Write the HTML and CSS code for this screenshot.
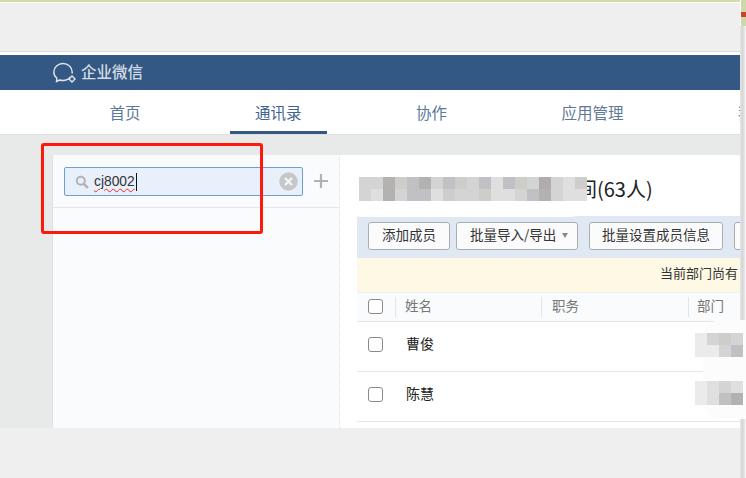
FILE: index.html
```html
<!DOCTYPE html>
<html lang="zh-CN">
<head>
<meta charset="utf-8">
<title>企业微信</title>
<link rel="stylesheet" href="styles.css">
</head>
<body>
<div class="shell">
  <main class="page">
    <div class="browser-bar"></div>
    <header class="brand">
      <svg class="brand-icon" width="26" height="22" viewBox="0 0 26 22" fill="none" stroke="#e3e7ec" stroke-width="1.4">
        <path d="M17.500 15C15.800 17 13 18.500 10 18.500C8.500 18.500 7.500 18.300 6.500 18L3.500 19.500L3.800 16C1.800 14.500.8 12.500.8 10C.8 5.500 5 1.500 10 1.500C15 1.500 19.200 5.500 19.200 10C19.200 10.500 19.100 11 19 11.500"/>
        <path d="M19 14l3 3-3 3-3-3z"/>
      </svg>
      <span class="brand-name">企业微信</span>
    </header>
    <nav class="nav">
      <a class="nav-item">首页</a>
      <a class="nav-item active">通讯录</a>
      <a class="nav-item">协作</a>
      <a class="nav-item">应用管理</a>
      <a class="nav-item">我的企业</a>
    </nav>
    <div class="content">
      <aside class="side">
        <div class="side-head">
          <div class="search">
            <svg class="search-icon" width="14" height="14" viewBox="0 0 14 14" fill="none" stroke="#b3b3b3">
              <circle cx="5.800" cy="5.800" r="4" stroke-width="2"/>
              <path d="M8.800 8.800l4 4" stroke-width="2.600"/>
            </svg>
            <span class="search-text">cj8002</span><span class="caret"></span>
            <svg class="clear" width="19" height="19" viewBox="0 0 19 19">
              <circle cx="9.500" cy="9.500" r="9.200" fill="#c6c7c9"/>
              <path d="M6 6l7 7M13 6l-7 7" stroke="#f3f5f8" stroke-width="2.400"/>
            </svg>
          </div>
          <svg class="plus" width="14" height="14" viewBox="0 0 14 14"><path d="M7 0v14M0 7h14" stroke="#b2b2b2" stroke-width="2.200"/></svg>
        </div>
      </aside>
      <section class="main">
        <div class="title-row">
          <div class="halo-title"></div>
          <div class="mosaic mosaic-title">
            <i class="t3"></i><i class="t3"></i><i class="t6"></i><i class="t4"></i><i class="t5"></i><i class="t6"></i><i class="t3"></i><i class="t5"></i><i class="t4"></i><i class="t3"></i><i class="t5"></i><i class="t2"></i><i class="t5"></i><i class="t4"></i><i class="t3"></i><i class="t7"></i><i class="t3"></i><i class="t2"></i><i class="t4"></i>
            <i class="t3"></i><i class="t2"></i><i class="t6"></i><i class="t3"></i><i class="t5"></i><i class="t5"></i><i class="t2"></i><i class="t4"></i><i class="t3"></i><i class="t3"></i><i class="t4"></i><i class="t2"></i><i class="t2"></i><i class="t3"></i><i class="t5"></i><i class="t6"></i><i class="t3"></i><i class="t2"></i><i class="t2"></i>
          </div>
          <h1 class="title">间(63人)</h1>
        </div>
        <div class="toolbar">
          <button class="btn btn-add">添加成员</button>
          <button class="btn btn-import">批量导入/导出<span class="arrow"></span></button>
          <button class="btn btn-set">批量设置成员信息</button>
          <button class="btn btn-more"></button>
        </div>
        <div class="notice"><span>当前部门尚有</span></div>
        <div class="table">
          <div class="row head">
            <div class="cell-check"><span class="check"></span></div>
            <div class="cell cell-name">姓名</div>
            <div class="cell">职务</div>
            <div class="cell cell-dept">部门</div>
          </div>
          <div class="row">
            <div class="cell-check"><span class="check"></span></div>
            <div class="cell name">曹俊</div>
          </div>
          <div class="row">
            <div class="cell-check"><span class="check"></span></div>
            <div class="cell name">陈慧</div>
          </div>
        </div>
      </section>
    </div>
    <div class="bottom"></div>
  </main>
  <div class="gutter"><div class="gutter-top"></div></div>

  <div class="mark"></div>
  <div class="halo-right"></div>
  <div class="mosaic mosaic-r1"><i class="t1"></i><i class="t3"></i><i class="t4"></i><i class="t3"></i><i class="t1"></i><i class="t1"></i><i class="t3"></i><i class="t5"></i></div>
  <div class="mosaic mosaic-r2"><i class="t1"></i><i class="t2"></i><i class="t3"></i><i class="t2"></i><i class="t1"></i><i class="t2"></i><i class="t5"></i><i class="t6"></i></div>
</div>
</body>
</html>
```
FILE: styles.css
```css
* { box-sizing: border-box; }
html, body { margin: 0; padding: 0; }
body {
  width: 746px;
  height: 478px;
  overflow: hidden;
  background: #fff;
  font-family: "Noto Sans CJK SC", "Liberation Sans", sans-serif;
  font-size: 14px;
}
.shell { position: relative; display: flex; width: 746px; height: 478px; overflow: hidden; }
.page { width: 740px; display: flex; flex-direction: column; background: #efefef; }

.browser-bar { height: 55px; flex: none; border-top: 2px solid #d3dca9; border-bottom: 4px solid #fff; background: #efefef; box-shadow: inset 0 1px 0 #fff; position: relative; }
.browser-bar::after { content: ""; position: absolute; left: 0; right: 0; bottom: -1px; height: 1px; background: #d9d9d9; }

.brand { height: 35px; flex: none; background: #335883; display: flex; align-items: center; padding-left: 53px; gap: 2px; }
.brand-icon { flex: none; }
.brand-name { color: #d4dbe4; font-size: 15.500px; font-weight: 500; line-height: 33px; height: 35px; }

.nav { height: 44px; flex: none; background: #fff; display: flex; gap: 64.500px; padding-left: 84.500px; overflow: hidden; white-space: nowrap; }
.nav-item { flex: none; height: 44px; padding: 0 25px; font-size: 15.500px; line-height: 45px; color: #5d7899; }
.nav-item.active { color: #3f6590; border-bottom: 3px solid #335883; }

.content { height: 294px; flex: none; background: #e8eaea; border-top: 1px solid #dfe1e1; padding: 20px 0 0 52px; display: flex; }
.side { width: 287px; background: #fafbfd; border-left: 1px solid #dfe1e3; }
.side-head { height: 53px; border-bottom: 1px solid #e4e6e9; display: flex; padding: 12px 0 0 11px; gap: 11px; }
.search { width: 239px; height: 29px; background: #e8f0fc; border: 1px solid #6c9fd3; border-radius: 2px; display: flex; align-items: center; padding: 0 4px 0 10px; }
.search-icon { flex: none; margin-right: 5px; }
.search-text { font-family: "Liberation Sans", sans-serif; font-size: 13.800px; color: #333; text-decoration: underline wavy #f0281e 1.200px; text-underline-offset: 2px; }
.caret { width: 1px; height: 18px; background: #111; margin-left: 1px; }
.clear { margin-left: auto; flex: none; }
.plus { margin-top: 7px; flex: none; }

.main { width: 401px; flex: none; background: #fff; border-left: 1px dotted #dcdfe4; padding-left: 17px; overflow: hidden; }
.title-row { height: 61px; display: flex; align-items: center; padding: 7px 0 0 2px; position: relative; }
.halo-title { position: absolute; left: -17px; top: 6px; width: 252px; height: 56px; background: #fff; border-radius: 22px; z-index: 1; }
.mosaic { display: grid; grid-auto-rows: 12px; grid-auto-columns: 12px; }
.mosaic i { display: block; }
.mosaic-title { flex: none; width: 227px; height: 24px; grid-template-columns: repeat(19, 12px); position: relative; z-index: 2; margin-top: -1px; }
.title { margin: 0 0 0 -9px; font-size: 20px; font-weight: 400; color: #222; line-height: 30px; white-space: nowrap; position: relative; z-index: 1; }
.t1 { background: #ebebeb; }
.t2 { background: #dfdfdf; }
.t3 { background: #d4d4d4; }
.t4 { background: #cdcdca; }
.t5 { background: #c0c1c4; }
.t6 { background: #b3b2b0; }
.t7 { background: #b0acac; }

.toolbar { height: 42px; background: #dfe8f3; display: flex; align-items: flex-start; padding: 6px 0 0 11px; white-space: nowrap; }
.btn { flex: none; height: 28px; background: #fbfbfc; border: 1px solid #a9adb3; border-radius: 3px; padding: 0 0 4px; font: inherit; font-size: 13.500px; color: #333; }
.btn-add { width: 82px; }
.btn-import { width: 122px; margin-left: 6px; padding-left: 13px; text-align: left; }
.btn-set { width: 134px; margin-left: 11px; }
.btn-more { width: 40px; margin-left: 11px; }
.arrow { display: inline-block; margin-left: 6px; border: 3.500px solid transparent; border-top: 5px solid #888; border-bottom: 0; vertical-align: 2px; }

.notice { height: 34px; background: #fef9e4; color: #333; font-size: 13px; line-height: 30px; padding-left: 303px; white-space: nowrap; }

.row { display: grid; grid-template-columns: 38px 146px 147px 1fr; height: 50px; align-items: center; border-bottom: 1px solid #e6e7e9; background: #fff; }
.row.head { height: 30px; background: #f9fbfd; border-top: 1px solid #eef0f3; border-bottom-color: #e2e5e9; color: #777; font-size: 13.500px; }
.head .cell { height: 20px; line-height: 16px; padding-left: 10px; border-left: 1px solid #e2e5e9; }
.head .cell-name { padding-left: 9px; }
.head .cell-dept { padding-left: 8px; }
.cell-check { padding: 0 0 4px 11px; display: flex; }
.head .cell-check { padding-bottom: 1px; }
.check { width: 15px; height: 15px; border: 1px solid #8a8a8a; border-radius: 3px; background: #fff; }
.name { padding: 0 0 7px 11px; color: #222; font-size: 14px; }

.bottom { flex: 1; background: #efefef; }

.gutter { width: 6px; flex: none; background: linear-gradient(to right, #e6e6e6, #d6d6d6 40%, #e8e8e8 80%, #fff); }
.gutter-top { height: 26px; border-left: 1px solid #fff; background: linear-gradient(#cfd8a8 0 12px, #c9452c 12px 17px, #cfd8a8 17px); }

.mark { position: absolute; left: 41px; top: 143px; width: 222px; height: 91px; border: 3px solid #fd1a0c; border-radius: 3px; }
.halo-right { position: absolute; left: 703px; top: 320px; width: 43px; height: 99px; background: #fcfcfc; border-radius: 18px 0 0 18px; }
.mosaic-r1, .mosaic-r2 { position: absolute; left: 695px; width: 48px; height: 24px; grid-template-columns: repeat(4, 12px); }
.mosaic-r1 { top: 333px; }
.mosaic-r2 { top: 381px; }
```
